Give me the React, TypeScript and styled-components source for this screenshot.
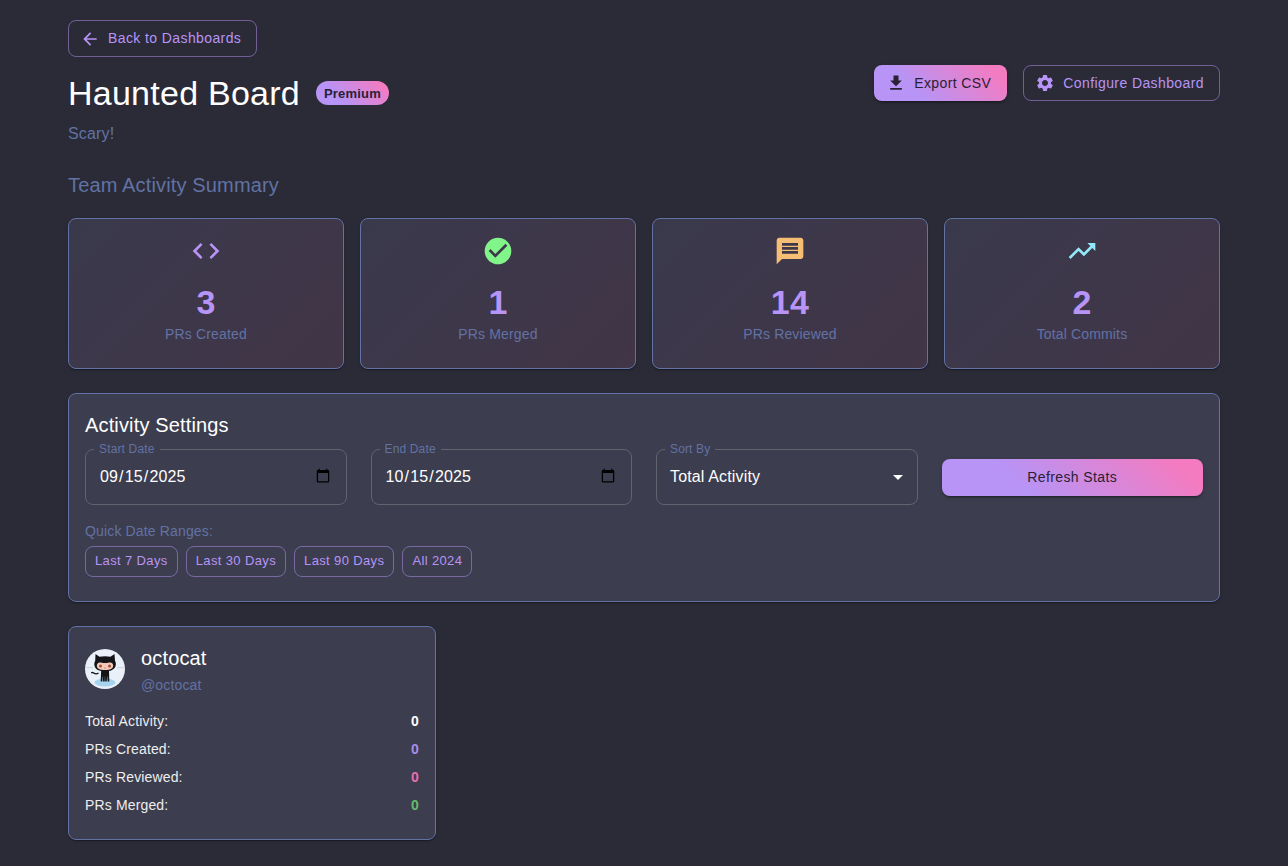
import React from "react";
import styled, { createGlobalStyle } from "styled-components";

const FONT = `Helvetica, "Liberation Sans", Arial, sans-serif`;

const Global = createGlobalStyle`
  html, body { margin: 0; padding: 0; background: #2a2b37; }
  body { font-family: ${FONT}; color: #ffffff; overflow: hidden; }
  * { box-sizing: border-box; }
`;

const GRAD = "linear-gradient(45deg, #b794f6 30%, #f47bc0 90%)";
const SHADOW = "0 2px 1px -1px rgba(0,0,0,.2), 0 1px 1px 0 rgba(0,0,0,.14), 0 1px 3px 0 rgba(0,0,0,.12)";

const Page = styled.main`
  width: 1200px;
  min-height: 866px;
  margin: 0 auto;
  padding: 20px 24px 26px;
`;
const OutlineButton = styled.button`
  display: inline-flex;
  align-items: center;
  justify-content: center;
  gap: 8px;
  height: ${(p: { $h?: number }) => p.$h ?? 37}px;
  padding: 0 15px 0 11px;
  background: transparent;
  border: 1px solid rgba(183, 148, 246, 0.5);
  border-radius: 8px;
  color: #b794f6;
  font: 400 14px/1.75 ${FONT};
  letter-spacing: 0.4px;
`;
const GradientButton = styled.button`
  display: inline-flex;
  align-items: center;
  justify-content: center;
  gap: 8px;
  height: ${(p: { $h?: number }) => p.$h ?? 37}px;
  width: ${(p: { $wide?: boolean }) => (p.$wide ? "100%" : "auto")};
  padding: 0 16px 0 ${(p: { $wide?: boolean }) => (p.$wide ? 16 : 12)}px;
  background: ${GRAD};
  border: 0;
  border-radius: 8px;
  color: #2a2035;
  font: 400 14px/1.75 ${FONT};
  letter-spacing: 0.4px;
  box-shadow: 0 3px 1px -2px rgba(0,0,0,.2), 0 2px 2px 0 rgba(0,0,0,.14), 0 1px 5px 0 rgba(0,0,0,.12);
`;
const Header = styled.header`
  display: flex;
  justify-content: space-between;
  align-items: flex-start;
  margin-top: 8px;
`;
const HeaderLeft = styled.div`
  padding-top: 7px;
`;
const TitleRow = styled.div`
  display: flex;
  align-items: center;
  gap: 16px;
`;
const Title = styled.h1`
  margin: 0;
  font-size: 34px;
  line-height: 42px;
  font-weight: 400;
  letter-spacing: 0.25px;
  color: #ffffff;
`;
const PremiumChip = styled.span`
  display: inline-flex;
  align-items: center;
  height: 24px;
  padding: 0 8px;
  border-radius: 12px;
  background: ${GRAD};
  color: #2a2035;
  font-size: 13px;
  font-weight: 700;
  letter-spacing: 0.2px;
`;
const Subtitle = styled.p`
  margin: 8px 0 0;
  font-size: 16px;
  line-height: 24px;
  letter-spacing: 0.15px;
  color: #6272a4;
`;
const Actions = styled.div`
  display: flex;
  gap: 16px;
`;
const SectionTitle = styled.h2`
  margin: 23px 0 17px;
  font-size: 20px;
  line-height: 32px;
  font-weight: 400;
  letter-spacing: 0.15px;
  color: #6272a4;
`;
const StatGrid = styled.section`
  display: grid;
  grid-template-columns: repeat(4, 1fr);
  gap: 16px;
`;
const StatCard = styled.article`
  height: 151px;
  padding: 16px;
  display: flex;
  flex-direction: column;
  align-items: center;
  border: 1px solid #6272a4;
  border-radius: 8px;
  background: linear-gradient(135deg, #3a394c 0%, #413547 100%);
  box-shadow: ${SHADOW};
`;
const StatIcon = styled.svg`
  width: 32px;
  height: 32px;
  display: block;
  fill: ${(p: { $c: string }) => p.$c};
  margin-bottom: 14px;
`;
const StatValue = styled.div`
  font-size: 34px;
  line-height: 42px;
  font-weight: 700;
  letter-spacing: 0.25px;
  color: #b794f6;
`;
const StatLabel = styled.div`
  margin-top: 1px;
  font-size: 14px;
  line-height: 20px;
  letter-spacing: 0.15px;
  color: #6272a4;
`;
const Panel = styled.section`
  margin-top: 24px;
  padding: 16px;
  height: 209px;
  border: 1px solid #6272a4;
  border-radius: 8px;
  background: #3c3d4e;
  box-shadow: ${SHADOW};
`;
const PanelTitle = styled.h3`
  margin: 0 0 7px;
  font-size: 20px;
  line-height: 30px;
  padding-bottom: 2px;
  font-weight: 400;
  letter-spacing: 0.15px;
  color: #ffffff;
`;
const Controls = styled.div`
  display: grid;
  grid-template-columns: repeat(4, 1fr);
  gap: 24px;
  align-items: center;
`;
const Field = styled.div`
  position: relative;
  height: 56px;
  border: 1px solid #62636f;
  border-radius: 8px;
  display: flex;
  align-items: center;
  padding: 0 13px 2px;
`;
const FieldLabel = styled.span`
  position: absolute;
  left: 8px;
  top: -7px;
  padding: 0 5px;
  background: #3c3d4e;
  font-size: 12px;
  line-height: 12px;
  letter-spacing: 0.15px;
  color: #6272a4;
`;
const DateInput = styled.input`
  width: 100%;
  border: 0;
  padding: 0;
  background: transparent;
  color: #ffffff;
  font: 400 16px/23px ${FONT};
  letter-spacing: 0.15px;
  outline: none;
`;
const SelectValue = styled.span`
  flex: 1;
  font-size: 16px;
  line-height: 23px;
  letter-spacing: 0.15px;
  color: #ffffff;
`;
const Caret = styled.svg`
  position: absolute;
  right: 7px;
  top: 15px;
  width: 24px;
  height: 24px;
  fill: #ffffff;
`;
const QuickLabel = styled.div`
  margin-top: 16px;
  font-size: 14px;
  line-height: 20px;
  letter-spacing: 0.15px;
  color: #6272a4;
`;
const Chips = styled.div`
  display: flex;
  gap: 8px;
  margin-top: 5px;
`;
const ChipButton = styled.button`
  height: 31px;
  padding: 0 9px;
  background: transparent;
  border: 1px solid rgba(183, 148, 246, 0.5);
  border-radius: 8px;
  color: #b794f6;
  font: 400 13px/1.75 ${FONT};
  letter-spacing: 0.37px;
`;
const UserGrid = styled.section`
  display: grid;
  grid-template-columns: repeat(3, 1fr);
  gap: 24px;
  margin-top: 24px;
`;
const UserCard = styled.article`
  height: 214px;
  padding: 16px;
  border: 1px solid #6272a4;
  border-radius: 8px;
  background: #3c3d4e;
  box-shadow: ${SHADOW};
`;
const UserHead = styled.div`
  display: flex;
  align-items: center;
  gap: 16px;
  margin-bottom: 12px;
`;
const Avatar = styled.svg`
  width: 40px;
  height: 40px;
  display: block;
  border-radius: 50%;
`;
const UserName = styled.div`
  font-size: 20px;
  line-height: 30px;
  margin-bottom: 2px;
  letter-spacing: 0.15px;
  color: #ffffff;
`;
const UserHandle = styled.div`
  font-size: 14px;
  line-height: 20px;
  letter-spacing: 0.15px;
  color: #6272a4;
`;
const StatRow = styled.div`
  display: flex;
  justify-content: space-between;
  height: 28px;
  align-items: center;
  font-size: 14px;
  letter-spacing: 0.15px;
  color: #eeeeee;
`;
const RowValue = styled.b`
  font-weight: 700;
  color: ${(p: { $c: string }) => p.$c};
`;
const BtnIcon = styled.svg`
  width: 20px;
  height: 20px;
  fill: currentColor;
  display: block;
`;

const P = {
  back: "M20 11H7.83l5.59-5.59L12 4l-8 8 8 8 1.41-1.41L7.83 13H20v-2z",
  download: "M19 9h-4V3H9v6H5l7 7 7-7zM5 18v2h14v-2H5z",
  gear: "M19.14 12.94c.04-.3.06-.61.06-.94 0-.32-.02-.64-.07-.94l2.03-1.58c.18-.14.23-.41.12-.61l-1.92-3.32c-.12-.22-.37-.29-.59-.22l-2.39.96c-.5-.38-1.03-.7-1.62-.94l-.36-2.54c-.04-.24-.24-.41-.48-.41h-3.84c-.24 0-.43.17-.47.41l-.36 2.54c-.59.24-1.13.57-1.62.94l-2.39-.96c-.22-.08-.47 0-.59.22L2.74 8.87c-.12.21-.08.47.12.61l2.03 1.58c-.05.3-.09.63-.09.94s.02.64.07.94l-2.03 1.58c-.18.14-.23.41-.12.61l1.92 3.32c.12.22.37.29.59.22l2.39-.96c.5.38 1.03.7 1.62.94l.36 2.54c.05.24.24.41.48.41h3.84c.24 0 .44-.17.47-.41l.36-2.54c.59-.24 1.13-.56 1.62-.94l2.39.96c.22.08.47 0 .59-.22l1.92-3.32c.12-.22.07-.47-.12-.61l-2.01-1.58zM12 15.6c-1.98 0-3.6-1.62-3.6-3.6s1.62-3.6 3.6-3.6 3.6 1.62 3.6 3.6-1.62 3.6-3.6 3.6z",
  code: "M9.4 16.6 4.8 12l4.6-4.6L8 6l-6 6 6 6 1.4-1.4zm5.2 0 4.6-4.6-4.6-4.6L16 6l6 6-6 6-1.4-1.4z",
  check: "M12 2C6.48 2 2 6.48 2 12s4.48 10 10 10 10-4.48 10-10S17.52 2 12 2zm-2 15-5-5 1.41-1.41L10 14.17l7.59-7.59L19 8l-9 9z",
  message: "M20 2H4c-1.1 0-1.99.9-1.99 2L2 22l4-4h14c1.1 0 2-.9 2-2V4c0-1.1-.9-2-2-2zm-2 12H6v-2h12v2zm0-3H6V9h12v2zm0-3H6V6h12v2z",
  trend: "m16 6 2.29 2.29-4.88 4.88-4-4L2 16.59 3.41 18l6-6 4 4 6.3-6.29L22 12V6z",
  caret: "M7 10l5 5 5-5z",
};

const stats = [
  { icon: P.code, color: "#b794f6", value: "3", label: "PRs Created" },
  { icon: P.check, color: "#81f58a", value: "1", label: "PRs Merged" },
  { icon: P.message, color: "#f6bd74", value: "14", label: "PRs Reviewed" },
  { icon: P.trend, color: "#90e8f8", value: "2", label: "Total Commits" },
];
const rows = [
  { label: "Total Activity:", color: "#ffffff" },
  { label: "PRs Created:", color: "#a98bea" },
  { label: "PRs Reviewed:", color: "#e76fb0" },
  { label: "PRs Merged:", color: "#66b96a" },
];

const Octocat = () => (
  <Avatar viewBox="0 0 40 40" role="img" aria-label="octocat">
    <rect width="40" height="40" fill="#e9f0f8" />
    <ellipse cx="20" cy="33.500" rx="10.500" ry="4" fill="#a6d3ee" />
    <path d="M1 18.700h7M32 18.700h7" stroke="#c3c8d0" strokeWidth="0.8" fill="none" />
    <path d="M10.500 5l4 2.800c3.400-.9 7.600-.9 11 0l4-2.800.5 6.800c1.300 2.200 1.200 5-.2 7-1.500 2.100-4 3-5.800 3.200l.3 10.500h-1.600l-.6-6-.3 6h-1.600l-.2-6-.3 6h-1.600l-.3-6-.5 6h-1.600l.4-10.500c-2.200-.3-4.600-1.200-5.800-3.200-1.300-2.100-1.400-4.800-.1-7z" fill="#141418" />
    <path d="M12 15.500c.8-2 2.800-2.200 4.800-1.800 2.200.4 4.200.4 6.400 0 2-.4 4-.2 4.800 1.800.7 2-.5 4.700-4.400 5.300-2.500.4-4.700.4-7.200 0-3.900-.6-5-3.300-4.400-5.300z" fill="#f3c9b6" />
    <circle cx="15.500" cy="17" r="1.500" fill="#a2503f" />
    <circle cx="24.500" cy="17" r="1.500" fill="#a2503f" />
    <circle cx="20" cy="19" r="0.600" fill="#a2503f" />
    <path d="M13.500 24c-1.800 1.500-3.200 1.200-4.800 0-.9-.7-1.700-.6-2.500 0" stroke="#141418" strokeWidth="1.300" fill="none" />
  </Avatar>
);

export default function App() {
  return (
    <>
      <Global />
      <Page>
        <OutlineButton>
          <BtnIcon viewBox="0 0 24 24"><path d={P.back} /></BtnIcon>
          Back to Dashboards
        </OutlineButton>
        <Header>
          <HeaderLeft>
            <TitleRow>
              <Title>Haunted Board</Title>
              <PremiumChip>Premium</PremiumChip>
            </TitleRow>
            <Subtitle>Scary!</Subtitle>
          </HeaderLeft>
          <Actions>
            <GradientButton $h={36}>
              <BtnIcon viewBox="0 0 24 24"><path d={P.download} /></BtnIcon>
              Export CSV
            </GradientButton>
            <OutlineButton $h={36}>
              <BtnIcon viewBox="0 0 24 24"><path d={P.gear} /></BtnIcon>
              Configure Dashboard
            </OutlineButton>
          </Actions>
        </Header>
        <SectionTitle>Team Activity Summary</SectionTitle>
        <StatGrid>
          {stats.map((s) => (
            <StatCard key={s.label}>
              <StatIcon viewBox="0 0 24 24" $c={s.color}><path d={s.icon} /></StatIcon>
              <StatValue>{s.value}</StatValue>
              <StatLabel>{s.label}</StatLabel>
            </StatCard>
          ))}
        </StatGrid>
        <Panel>
          <PanelTitle>Activity Settings</PanelTitle>
          <Controls>
            <Field>
              <FieldLabel>Start Date</FieldLabel>
              <DateInput type="date" defaultValue="2025-09-15" />
            </Field>
            <Field>
              <FieldLabel>End Date</FieldLabel>
              <DateInput type="date" defaultValue="2025-10-15" />
            </Field>
            <Field>
              <FieldLabel>Sort By</FieldLabel>
              <SelectValue>Total Activity</SelectValue>
              <Caret viewBox="0 0 24 24"><path d={P.caret} /></Caret>
            </Field>
            <GradientButton $wide>Refresh Stats</GradientButton>
          </Controls>
          <QuickLabel>Quick Date Ranges:</QuickLabel>
          <Chips>
            {["Last 7 Days", "Last 30 Days", "Last 90 Days", "All 2024"].map((c) => (
              <ChipButton key={c}>{c}</ChipButton>
            ))}
          </Chips>
        </Panel>
        <UserGrid>
          <UserCard>
            <UserHead>
              <Octocat />
              <div>
                <UserName>octocat</UserName>
                <UserHandle>@octocat</UserHandle>
              </div>
            </UserHead>
            {rows.map((r) => (
              <StatRow key={r.label}>
                <span>{r.label}</span>
                <RowValue $c={r.color}>0</RowValue>
              </StatRow>
            ))}
          </UserCard>
        </UserGrid>
      </Page>
    </>
  );
}
